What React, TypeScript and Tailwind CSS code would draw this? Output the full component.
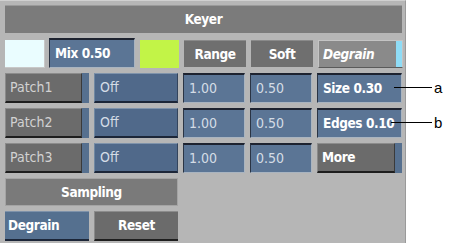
import React from "react";

const font = { fontFamily: '"DejaVu Sans Condensed", "Liberation Sans Narrow", "Liberation Sans", sans-serif' };

function Field({ text, w, bold = false, raised = false }: { text: string; w: string; bold?: boolean; raised?: boolean }) {
  return (
    <div
      className={`${w} h-[30px] flex items-center pl-[5px] whitespace-nowrap overflow-hidden ${
        raised
          ? "bg-[#50698a] border-t border-t-[#7f93ab] border-l border-l-[#7088a2] border-b-2 border-b-[#1c2638] border-r border-r-[#33445c]"
          : "bg-[#5b7595] border-t-2 border-t-[#1e2330] border-l border-l-[#2a3444] border-b border-b-[#a9b4c0] border-r border-r-[#a9b4c0]"
      } ${bold ? "text-white font-bold text-[13.5px] tracking-[-0.4px]" : "text-[#d4dce6] text-[14px]"}`}
    >
      {text}
    </div>
  );
}

function PatchBtn({ text }: { text: string }) {
  return (
    <div className="w-[84px] h-[30px] flex bg-[#56708f]">
      <div className="w-[77px] h-full flex items-center pl-[4px] bg-[#6b6b6b] border-t border-t-[#8c8c8c] border-l border-l-[#8a8a8a] border-b-2 border-b-[#1e1e1e] border-r border-r-[#3a3a3a] text-[14px] text-[#d2d2d2] whitespace-nowrap">
        {text}
      </div>
    </div>
  );
}

const boldTxt = "text-white font-bold text-[13.5px] tracking-[-0.4px] whitespace-nowrap";

export default function App() {
  return (
    <div className="relative w-[449px] h-[245px] bg-white" style={font}>
      <div className="w-[406px] h-[243px] bg-[#b6b6b6] border-t border-t-[#d0d0d0] border-r border-r-[#9a9a9a] pt-[4px] pl-[5px] flex flex-col gap-[5px]">
        <div className={`w-[397px] h-[28px] bg-[#7b7b7b] border-t border-t-[#9a9a9a] flex items-center justify-center ${boldTxt}`}>
          Keyer
        </div>
        {/* Row 1 */}
        <div className="flex items-end gap-[4px] h-[30px]">
          <div className="w-[40px] h-[28px] bg-[#eafdff] border-r border-b border-[#c8c8c8]" />
          <Field text="Mix 0.50" w="w-[86px]" bold />
          <div className="w-[39px] h-[28px] bg-[#c2f447] ml-[1px]" />
          <div className={`w-[62px] h-[27px] mb-[1px] ml-[1px] bg-[#6f6f6f] border-t border-t-[#8a8a8a] flex items-center justify-center ${boldTxt}`}>
            Range
          </div>
          <div className={`w-[62px] h-[27px] mb-[1px] ml-[1px] bg-[#6f6f6f] border-t border-t-[#8a8a8a] flex items-center justify-center ${boldTxt}`}>
            Soft
          </div>
          <div className="w-[85px] h-[28px] ml-[1px] bg-[#8a8a8a] border border-[#c4c4c4] border-b-[#5a5a5a] flex items-center">
            <span className={`flex-1 pl-[4px] italic ${boldTxt}`}>Degrain</span>
            <div className="w-[6px] h-full bg-[#8fdcf6]" />
          </div>
        </div>
        {[
          ["Patch1", "Size 0.30"],
          ["Patch2", "Edges 0.10"],
        ].map(([p, r]) => (
          <div key={p} className="flex gap-[5px]">
            <PatchBtn text={p} />
            <Field text="Off" w="w-[84px]" raised />
            <Field text="1.00" w="w-[62px]" />
            <Field text="0.50" w="w-[62px]" />
            <Field text={r} w="w-[85px]" bold />
          </div>
        ))}
        <div className="flex gap-[5px]">
          <PatchBtn text="Patch3" />
          <Field text="Off" w="w-[84px]" raised />
          <Field text="1.00" w="w-[62px]" />
          <Field text="0.50" w="w-[62px]" />
          <div className="w-[85px] h-[30px] flex bg-[#56708f]">
            <div className={`w-[78px] h-full flex items-center pl-[4px] bg-[#6b6b6b] border-t border-t-[#8c8c8c] border-l border-l-[#8a8a8a] border-b-2 border-b-[#1e1e1e] border-r border-r-[#3a3a3a] ${boldTxt}`}>
              More
            </div>
          </div>
        </div>
        <div className={`w-[173px] h-[28px] bg-[#7a7a7a] border border-[#a4a4a4] flex items-center justify-center ${boldTxt}`}>
          Sampling
        </div>
        <div className="flex gap-[5px]">
          <div className={`w-[84px] h-[30px] bg-[#55708f] border-t border-t-[#7e92aa] border-b-2 border-b-[#1c2638] flex items-center pl-[3px] ${boldTxt}`}>
            Degrain
          </div>
          <div className={`w-[84px] h-[30px] bg-[#6b6b6b] border-t border-t-[#8c8c8c] border-l border-l-[#8a8a8a] border-b-2 border-b-[#1e1e1e] flex items-center justify-center ${boldTxt}`}>
            Reset
          </div>
        </div>
      </div>
      {/* annotations */}
      <div className="absolute left-[394px] top-[87px] w-[38px] h-[1px] bg-black" />
      <div className="absolute left-[391px] top-[122px] w-[41px] h-[1px] bg-black" />
      <span className="absolute left-[434px] top-[77px] text-[15px] text-black" style={{ fontFamily: '"Liberation Sans", sans-serif' }}>a</span>
      <span className="absolute left-[434px] top-[112px] text-[15px] text-black" style={{ fontFamily: '"Liberation Sans", sans-serif' }}>b</span>
    </div>
  );
}
